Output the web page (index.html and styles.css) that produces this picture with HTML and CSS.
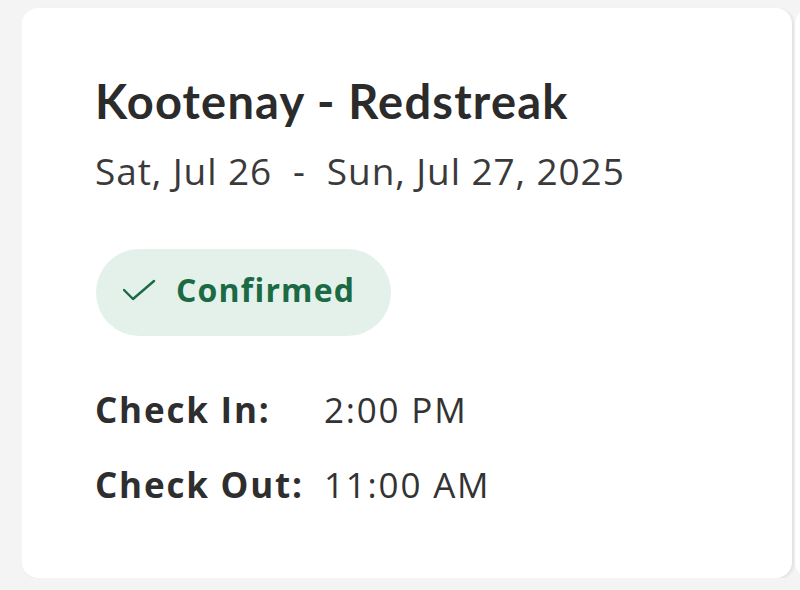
FILE: index.html
```html
<!DOCTYPE html>
<html lang="en">
<head>
    <meta charset="UTF-8">
    <meta name="viewport" content="width=device-width, initial-scale=1.0">
    <title>Reservation</title>
    <link rel="stylesheet" href="styles.css">
</head>
<body>
    <div class="cards">
        <div class="card">
            <h1 class="park-name">Kootenay - Redstreak</h1>
            <div class="dates">Sat, Jul 26 &nbsp;-&nbsp; Sun, Jul 27, 2025</div>

            <div class="status">
                <svg class="status-icon" width="34" height="24" viewBox="0 0 34 24">
                    <path d="M1 11 L10 20 L31 2" fill="none" stroke="currentColor" stroke-width="2.4" stroke-linecap="round" stroke-linejoin="round"/>
                </svg>
                <span>Confirmed</span>
            </div>

            <div class="times">
                <div class="time-row">
                    <span class="time-label">Check In:</span>
                    <span class="time-value">2:00 PM</span>
                </div>
                <div class="time-row">
                    <span class="time-label">Check Out:</span>
                    <span class="time-value">11:00 AM</span>
                </div>
            </div>
        </div>
        <div class="card card-next"></div>
    </div>
</body>
</html>
```

FILE: styles.css
```css
body {
    font-family: "Open Sans", "Noto Sans", Arial, sans-serif;
    background-color: #f4f4f4;
    color: #333;
    margin: 0;
    padding: 8px 0 0 22px;
    overflow: hidden;
}
.cards {
    display: flex;
    gap: 3px;
}
.card {
    flex: none;
    width: 770px;
    height: 570px;
    box-sizing: border-box;
    background: #fff;
    border-radius: 16px;
    padding: 65px 0 0 73px;
    box-shadow: 2px 1px 3px rgba(0,0,0,0.08);
}
.card-next {
    width: 40px;
    border-radius: 16px 0 0 16px;
    box-shadow: none;
    padding: 0;
}
.park-name {
    font-family: Lato, "Open Sans", sans-serif;
    font-weight: 700;
    font-size: 47px;
    letter-spacing: 1.2px;
    line-height: 1.2;
    color: #2b2b2b;
    margin: 0;
}
.dates {
    font-size: 37px;
    letter-spacing: 0.9px;
    line-height: 44px;
    color: #3a3a3a;
    margin-top: 20px;
}
.status {
    display: inline-flex;
    align-items: center;
    gap: 19px;
    box-sizing: border-box;
    height: 87px;
    margin-top: 56px;
    margin-left: 1px;
    padding: 0 36px 7px 27px;
    border-radius: 44px;
    background: #e3f1ea;
    color: #1b6a43;
    font-size: 32px;
    font-weight: 700;
    letter-spacing: 1.2px;
}
.status-icon {
    display: block;
    margin-top: 3px;
}
.times {
    display: flex;
    flex-direction: column;
    gap: 33px;
    margin-top: 53px;
}
.time-row {
    display: flex;
    font-size: 35px;
    line-height: 42px;
    letter-spacing: 1.8px;
}
.time-label {
    width: 229px;
    font-weight: 700;
    color: #2e2e2e;
}
.time-value {
    color: #333;
}
```
